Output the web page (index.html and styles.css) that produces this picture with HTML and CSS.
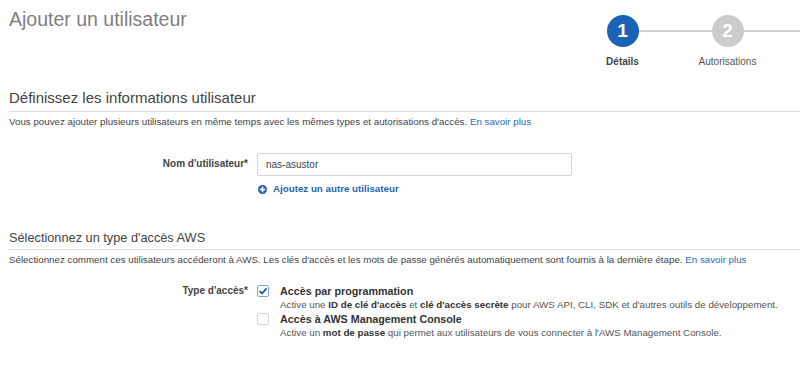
FILE: index.html
```html
<!DOCTYPE html>
<html lang="fr">
  <head>
    <meta charset="UTF-8" />
    <meta name="viewport" content="width=device-width, initial-scale=1.0" />
    <title>Ajouter un utilisateur</title>
    <link rel="stylesheet" href="styles.css">
  </head>
  <body>
    <div class="header">
      <h1 class="page-title">Ajouter un utilisateur</h1>
      <div class="stepper">
        <div class="step active">
          <div class="step-circle">1</div>
          <div class="step-label">Détails</div>
        </div>
        <div class="step">
          <div class="step-circle">2</div>
          <div class="step-label">Autorisations</div>
        </div>
      </div>
    </div>

    <div class="section">
      <h2 class="section-title">Définissez les informations utilisateur</h2>
      <p class="section-desc">
        Vous pouvez ajouter plusieurs utilisateurs en même temps avec les mêmes types et autorisations d'accès.
        <a href="#">En savoir plus</a>
      </p>

      <div class="form-row user-row">
        <label class="form-label" for="username">Nom d'utilisateur*</label>
        <div class="form-field">
          <input type="text" id="username" value="nas-asustor" />
          <a href="#" class="add-user">
            <svg width="9" height="9" viewBox="0 0 10 10">
              <circle cx="5" cy="5" r="5" fill="#1f63b0" />
              <rect x="2" y="4.1" width="6" height="1.8" fill="#fff" />
              <rect x="4.1" y="2" width="1.8" height="6" fill="#fff" />
            </svg>
            Ajoutez un autre utilisateur
          </a>
        </div>
      </div>
    </div>

    <div class="section section-access">
      <h3 class="section-title small">Sélectionnez un type d'accès AWS</h3>
      <p class="section-desc">
        Sélectionnez comment ces utilisateurs accéderont à AWS. Les clés d'accès et les mots de passe générés automatiquement sont fournis à la dernière étape.
        <a href="#">En savoir plus</a>
      </p>

      <div class="form-row access-row">
        <div class="form-label">Type d'accès*</div>
        <div class="form-field">
          <div class="option">
            <span class="checkbox checked">
              <svg width="10" height="10" viewBox="0 0 10 10">
                <path d="M1.5 5.2 L4 7.5 L8.5 2.3" fill="none" stroke="#1a5cab" stroke-width="1.8" />
              </svg>
            </span>
            <div class="option-text">
              <div class="option-title">Accès par programmation</div>
              <div class="option-desc">Active une <b>ID de clé d'accès</b> et <b>clé d'accès secrète</b> pour AWS API, CLI, SDK et d'autres outils de développement.</div>
            </div>
          </div>
          <div class="option">
            <span class="checkbox"></span>
            <div class="option-text">
              <div class="option-title">Accès à AWS Management Console</div>
              <div class="option-desc">Active un <b>mot de passe</b> qui permet aux utilisateurs de vous connecter à l'AWS Management Console.</div>
            </div>
          </div>
        </div>
      </div>
    </div>
  </body>
</html>
```

FILE: styles.css
```css
body {
  font-family: "Liberation Sans", Arial, sans-serif;
  background-color: #ffffff;
  color: #444;
  margin: 0;
  padding: 0 0 0 9px;
  overflow: hidden;
}

a {
  color: #2a6db5;
  text-decoration: none;
}

.header {
  display: flex;
  align-items: flex-start;
  height: 89px;
}

.page-title {
  flex: 1;
  margin: 8px 0 0;
  font-size: 19.5px;
  font-weight: normal;
  color: #808080;
}

.stepper {
  display: flex;
  flex: none;
  width: 230px;
  margin-top: 15px;
  overflow: hidden;
}

.step {
  position: relative;
  width: 105px;
  flex: none;
  display: flex;
  flex-direction: column;
  align-items: center;
}

/* connector line to the next step */
.step::after {
  content: "";
  position: absolute;
  top: 15px;
  left: calc(50% + 16px);
  width: 73px;
  height: 2px;
  background: #d2d2d2;
}

.step-circle {
  width: 32px;
  height: 32px;
  border-radius: 50%;
  background: #cccccc;
  color: #fff;
  font-weight: bold;
  font-size: 19px;
  line-height: 32px;
  text-align: center;
}

.step.active .step-circle {
  background: #1a62b5;
}

.step-label {
  margin-top: 9px;
  font-size: 10px;
  color: #555;
}

.step.active .step-label {
  font-weight: bold;
  color: #444;
}

.section-title {
  margin: 0;
  padding-bottom: 4px;
  border-bottom: 1px solid #dcdcdc;
  font-size: 15px;
  line-height: 18px;
  font-weight: normal;
  color: #444;
}

.section-title.small {
  font-size: 12.75px;
  line-height: 16px;
  padding-bottom: 3px;
}

.section-desc {
  margin: 4px 0 0;
  font-size: 9.75px;
  line-height: 12px;
  color: #444;
}

.form-row {
  display: flex;
  align-items: flex-start;
}

.form-label {
  width: 239px;
  padding-right: 9px;
  text-align: right;
  font-size: 10px;
  font-weight: bold;
  color: #444;
}

.user-row {
  margin-top: 25px;
}

.user-row .form-label {
  line-height: 22px;
}

.form-field input[type="text"] {
  box-sizing: border-box;
  display: block;
  width: 315px;
  height: 23px;
  padding: 0 8px;
  border: 1px solid #d5d5d5;
  border-radius: 2px;
  font-family: inherit;
  font-size: 10px;
  color: #444;
}

.add-user {
  display: flex;
  align-items: center;
  gap: 6px;
  margin: 7px 0 0 1px;
  font-size: 9.75px;
  line-height: 12px;
  font-weight: bold;
  color: #1f63b0;
}

.section-access {
  margin-top: 35px;
}

.access-row {
  margin-top: 18px;
}

.access-row .form-label {
  line-height: 14px;
}

.option {
  display: flex;
  align-items: flex-start;
  gap: 11px;
  font-size: 10px;
  line-height: 14px;
}

.checkbox {
  box-sizing: border-box;
  display: flex;
  align-items: center;
  justify-content: center;
  width: 12px;
  height: 12px;
  margin-top: 1px;
  border: 1px solid #d8d8d8;
  border-radius: 2px;
  background: #fff;
}

.checkbox.checked {
  border-color: #7ea6d6;
}

.option-title {
  font-size: 10.75px;
  font-weight: bold;
  color: #333;
}

.option-desc {
  font-size: 9.75px;
  color: #555;
}

.option-desc b {
  color: #333;
}
```
